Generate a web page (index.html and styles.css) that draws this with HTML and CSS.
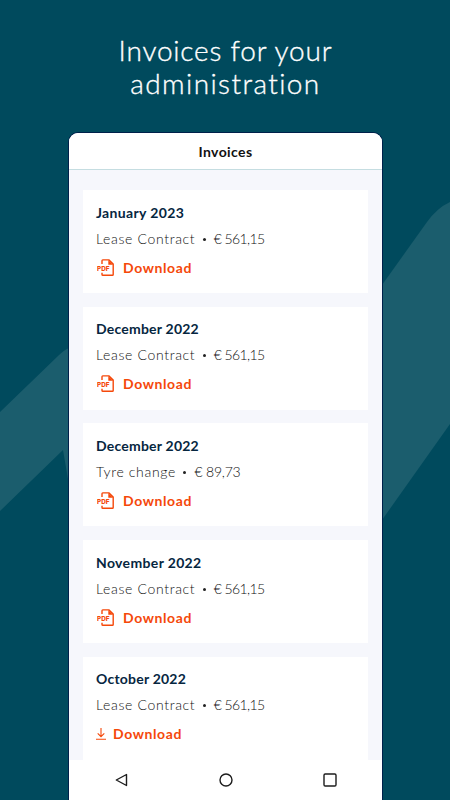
FILE: index.html
```
<!DOCTYPE html>
<html lang="en">
<head>
  <meta charset="UTF-8">
  <title>Invoices</title>
  <link rel="stylesheet" href="styles.css">
</head>
<body>

  <!-- Background wave -->
  <svg class="wave" viewBox="0 0 450 800" aria-hidden="true">
    <path d="M0 412 L58 356 Q64 350 69 348 V485 L63 450 L0 511 Z" />
    <path d="M382 285 L427 222 Q437 208 450 202 V424 L382 520 Z" />
  </svg>

  <svg class="symbols" aria-hidden="true">
    <symbol id="pdf" viewBox="0 0 18 18">
      <path d="M5 5V1.7Q5 .9 5.8 .9H12L16.2 5.1V15.5Q16.2 16.3 15.4 16.3H5.8Q5 16.3 5 15.5V13.7" fill="none" stroke="currentColor" stroke-width="1.4" />
      <path d="M11.3 1V5.7H16.2Z" fill="currentColor" />
    </symbol>
    <symbol id="arrow" viewBox="0 0 10 12">
      <path d="M5 0V8.5M1.7 5.3L5 8.6L8.3 5.3M0 11.2H10" fill="none" stroke="currentColor" stroke-width="1.1" />
    </symbol>
  </svg>

  <h1>Invoices for your<br><span>administration</span></h1>

  <main class="phone">
    <header>Invoices</header>

    <section class="invoices">
      <article class="card">
        <h2 class="january">January 2023</h2>
        <p><span class="contract">Lease Contract</span><i></i><span class="price">€ 561,15</span></p>
        <a class="download"><svg class="icon-pdf" viewBox="0 0 18 18"><use href="#pdf" /><text x="0" y="11.8" textLength="12.5" lengthAdjust="spacingAndGlyphs">PDF</text></svg><span>Download</span></a>
      </article>
      <article class="card">
        <h2>December 2022</h2>
        <p><span class="contract">Lease Contract</span><i></i><span class="price">€ 561,15</span></p>
        <a class="download"><svg class="icon-pdf" viewBox="0 0 18 18"><use href="#pdf" /><text x="0" y="11.8" textLength="12.5" lengthAdjust="spacingAndGlyphs">PDF</text></svg><span>Download</span></a>
      </article>
      <article class="card">
        <h2>December 2022</h2>
        <p><span class="contract">Tyre change</span><i></i><span class="price tyre">€ 89,73</span></p>
        <a class="download"><svg class="icon-pdf" viewBox="0 0 18 18"><use href="#pdf" /><text x="0" y="11.8" textLength="12.5" lengthAdjust="spacingAndGlyphs">PDF</text></svg><span>Download</span></a>
      </article>
      <article class="card">
        <h2 class="november">November 2022</h2>
        <p><span class="contract">Lease Contract</span><i></i><span class="price">€ 561,15</span></p>
        <a class="download"><svg class="icon-pdf" viewBox="0 0 18 18"><use href="#pdf" /><text x="0" y="11.8" textLength="12.5" lengthAdjust="spacingAndGlyphs">PDF</text></svg><span>Download</span></a>
      </article>
      <article class="card">
        <h2>October 2022</h2>
        <p><span class="contract">Lease Contract</span><i></i><span class="price">€ 561,15</span></p>
        <a class="download"><svg class="icon-arrow"><use href="#arrow" /></svg><span>Download</span></a>
      </article>
    </section>

    <nav>
      <svg viewBox="0 0 16 16"><path d="M12.5 2.5V13.5L2.3 8Z" /></svg>
      <svg viewBox="0 0 16 16"><circle cx="8" cy="8" r="6" /></svg>
      <svg viewBox="0 0 16 16"><rect x="2" y="2" width="12" height="12" rx="1.2" /></svg>
    </nav>
  </main>

</body>
</html>
```
FILE: styles.css
```
body {
  margin: 0;
  height: 800px;
  overflow: hidden;
  background-color: #004a5d;
  font-family: Lato, "Open Sans", sans-serif;
  display: flex;
  flex-direction: column;
}

.wave {
  position: absolute;
  top: 0;
  left: 0;
  width: 450px;
  height: 800px;
  fill: #1b5d6d;
}

.symbols {
  position: absolute;
  width: 0;
  height: 0;
}

h1 {
  margin: 0;
  padding: 34px 0 0 1px;
  height: 99px;
  color: white;
  font-size: 28px;
  font-weight: 300;
  line-height: 33px;
  letter-spacing: 0.8px;
  text-align: center;
  -webkit-text-stroke: 0.35px white;
}

h1 span {
  letter-spacing: 1.4px;
}

.phone {
  position: relative;
  width: 313px;
  height: 667px;
  margin-left: 69px;
  display: flex;
  flex-direction: column;
  overflow: hidden;
  border-radius: 9px 9px 0 0;
  background-color: #f6f7fc;
  box-shadow: 0 0 0 1px #00204a;
}

header {
  height: 36px;
  flex: none;
  border-bottom: 1px solid #c5dde1;
  background-color: white;
  color: #111;
  font-size: 14px;
  font-weight: 700;
  line-height: 38px;
  letter-spacing: 0.4px;
  text-align: center;
}

.invoices {
  flex: 1;
  min-height: 0;
  overflow: hidden;
  padding: 20px 14px 0 13.5px;
  display: flex;
  flex-direction: column;
  gap: 13.7px;
}

.card {
  flex: none;
  box-sizing: border-box;
  height: 103px;
  padding: 12.5px 13.5px;
  background-color: white;
}

.card h2 {
  margin: 0;
  color: #06263f;
  font-size: 14px;
  font-weight: 700;
  line-height: 20px;
  letter-spacing: 0.22px;
}

.card .january,
.card .november {
  letter-spacing: 0.35px;
}

.card p {
  margin: 6px 0 9px;
  display: flex;
  align-items: center;
  color: #111;
  font-size: 14px;
  font-weight: 300;
  line-height: 20px;
}

.contract {
  letter-spacing: 0.66px;
}

.price {
  letter-spacing: -0.6px;
}

.price.tyre {
  letter-spacing: -0.2px;
}

.card i {
  width: 3px;
  height: 3px;
  margin: 1px 8px 0 7.5px;
  border-radius: 50%;
  background-color: #222;
}

.download {
  display: flex;
  align-items: center;
  height: 20px;
  color: #f5480a;
  font-size: 14px;
  font-weight: 700;
  letter-spacing: 0.6px;
}

.download span {
  margin-top: -1px;
}

.icon-pdf {
  width: 18px;
  height: 18px;
  margin: 0 8px 0 1px;
}

.icon-pdf text {
  font-family: Inter, sans-serif;
  font-size: 6.5px;
  font-weight: 800;
  letter-spacing: 0;
  fill: currentColor;
}

.icon-arrow {
  width: 10px;
  height: 12px;
  margin-right: 7px;
}

nav {
  height: 40px;
  flex: none;
  display: flex;
  justify-content: space-between;
  align-items: center;
  padding: 0 44.5px;
  background-color: white;
}

nav svg {
  width: 16px;
  height: 16px;
  fill: none;
  stroke: #1c1c1c;
  stroke-width: 1.4;
  stroke-linejoin: round;
}
```
